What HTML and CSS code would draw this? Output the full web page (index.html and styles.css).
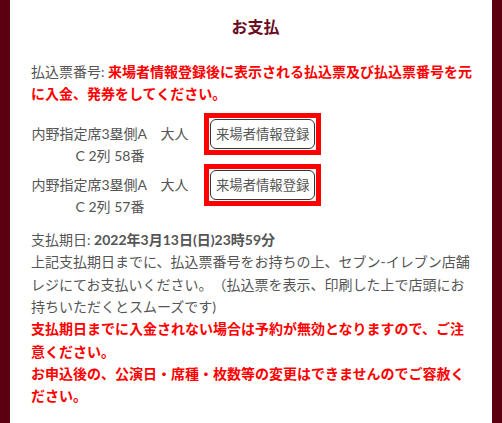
FILE: index.html
```html
<!DOCTYPE html>
<html lang="ja">
<head>
<meta charset="utf-8">
<title>お支払</title>
<link rel="stylesheet" href="styles.css">
</head>
<body>
<div class="page">
  <h2 class="title">お支払</h2>
  <p class="notice">払込票番号: <strong class="alert">来場者情報登録後に表示される払込票及び払込票番号を元に入金、発券をしてください。</strong></p>
  <div class="tickets">
    <div class="ticket">
      <div class="ticket-name">内野指定席3塁側A　大人<br>C 2列 58番</div>
      <span class="frame"><button class="btn" type="button">来場者情報登録</button></span>
    </div>
    <div class="ticket">
      <div class="ticket-name">内野指定席3塁側A　大人<br>C 2列 57番</div>
      <span class="frame"><button class="btn" type="button">来場者情報登録</button></span>
    </div>
  </div>
  <p class="deadline">支払期日: <strong>2022年3月13日(日)23時59分</strong><br>上記支払期日までに、払込票番号をお持ちの上、セブン-イレブン店舗レジにてお支払いください。（払込票を表示、印刷した上で店頭にお持ちいただくとスムーズです)<br><strong class="alert">支払期日までに入金されない場合は予約が無効となりますので、ご注意ください。</strong><br><strong class="alert">お申込後の、公演日・席種・枚数等の変更はできませんのでご容赦ください。</strong></p>
</div>
</body>
</html>
```

FILE: styles.css
```css
html, body {
  margin: 0;
  padding: 0;
}

body {
  background: #5b0011;
  font-family: Lato, "Noto Sans CJK JP", sans-serif;
  font-size: 14px;
  line-height: 1.6;
  color: #555555;
  text-spacing-trim: space-all;
}

.page {
  margin: 0 10px;
  background: #ffffff;
  min-height: 100vh;
  box-sizing: border-box;
  padding: 15px 16px 20px 21px;
}

.title {
  margin: 0 0 22px;
  text-align: center;
  font-size: 16px;
  line-height: 24px;
  font-weight: 700;
  color: #6a0c1e;
  padding-left: 4px;
}

.notice {
  margin: 0;
}

.alert {
  color: #ff0000;
  font-weight: 700;
}

.tickets {
  margin-top: 13px;
}

.ticket {
  display: flex;
  align-items: baseline;
  margin-bottom: 2.4px;
}

.ticket-name {
  width: 158px;
  text-align: center;
  white-space: nowrap;
}

.frame {
  display: inline-block;
  border: 5px solid #ff0000;
  padding: 1px;
  margin: -6px -6px -6px 15px;
}

.btn {
  display: block;
  margin: 0;
  padding: 3px 5px;
  height: 30px;
  box-sizing: border-box;
  border: 1px solid #333333;
  border-radius: 6px;
  background: #ffffff;
  color: #555555;
  font-family: Lato, "Noto Sans CJK JP", sans-serif;
  font-size: 13.333px;
  line-height: 22px;
  white-space: nowrap;
}

.deadline {
  margin: 10px 0 0;
}

.deadline strong {
  font-weight: 700;
}
```
